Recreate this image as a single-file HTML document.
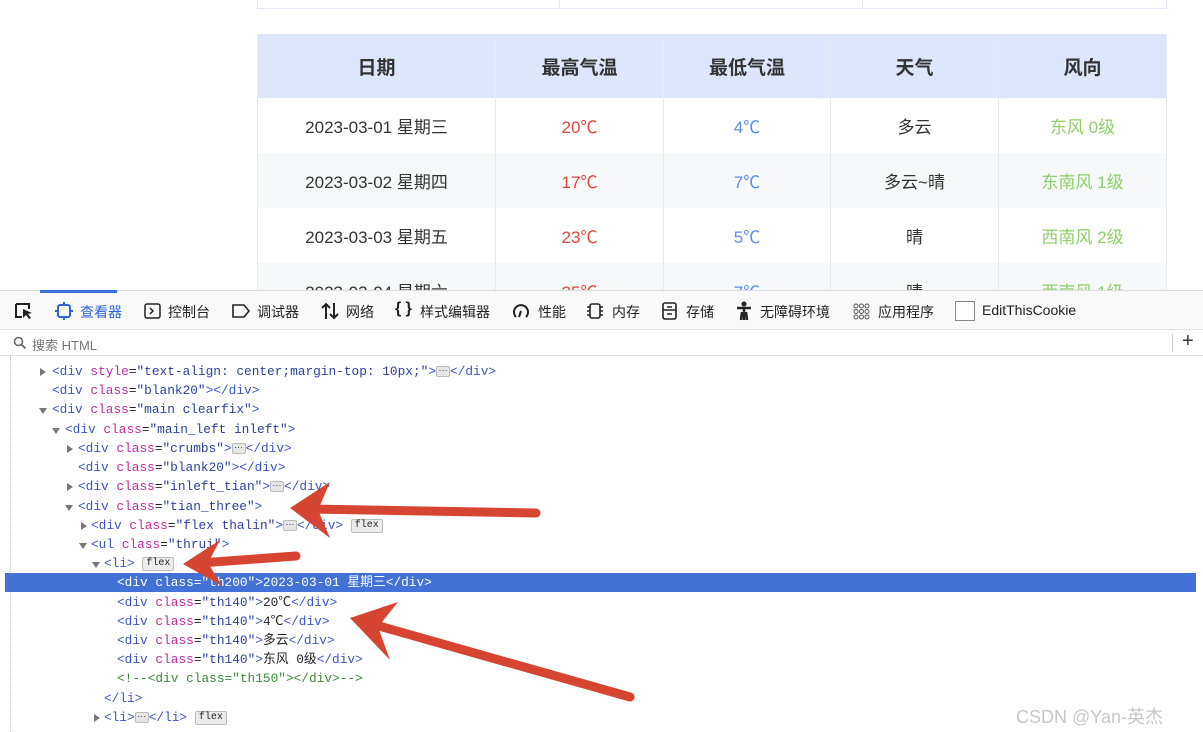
<!DOCTYPE html>
<html><head><meta charset="utf-8"><style>
*{margin:0;padding:0;box-sizing:border-box}
body{width:1203px;height:732px;overflow:hidden;background:#fff;position:relative;font-family:"Liberation Sans","Noto Sans CJK SC",sans-serif}
.abs{position:absolute}
table{position:absolute;left:257px;top:34px;border-collapse:collapse;width:910px;font-size:17px;color:#333}
td,th{text-align:center;border:1px solid #e6eaf3;border-top:none;border-bottom:none}
th{background:#dde6fa;height:64px;font-weight:bold;font-size:19px;color:#333}
td{height:55px}
tr.g td{background:#f7f8fa}
.r{color:#e0463a}.b{color:#5b8ef0}.gr{color:#8fcf6a}
.tb{left:0;top:290px;width:1203px;height:40px;background:#f9f9fa;border-top:1px solid #ddd;border-bottom:1px solid #e0e0e0;font-size:14px;color:#222}
.tb span{position:absolute;top:11px;white-space:nowrap}
.sr{left:0;top:330px;width:1203px;height:26px;border-bottom:1px solid #e0e0e0;font-size:13px;color:#777}
.tree{left:0;top:356px;width:1203px;height:376px}
.ln{position:absolute;height:19px;line-height:19px;white-space:pre;color:#222;font-family:"Liberation Mono","Noto Sans CJK SC",monospace;font-size:12.8px}
.t{color:#3a56c4}.a{color:#c02ba0}.v{color:#2a3f9e}.c{color:#3c8a3c}
.tri{position:absolute;width:0;height:0}
.tr{border-top:4px solid transparent;border-bottom:4px solid transparent;border-left:6px solid #777}
.td{border-left:4px solid transparent;border-right:4px solid transparent;border-top:6px solid #777}
.dots{display:inline-block;width:14px;height:11px;background:#e6e6e6;border:1px solid #bbb;border-radius:2px;font-size:9px;line-height:6px;text-align:center;vertical-align:middle;color:#333;font-family:"Liberation Sans",sans-serif}
.fx{display:inline-block;font-size:10px;line-height:12px;padding:0 3px;background:#ececec;border:1px solid #bbb;border-radius:2px;vertical-align:middle;color:#222}
.hl{left:5px;top:573px;width:1191px;height:19px;background:#4372d6}
</style></head><body>
<div class="abs" style="left:257px;top:0;width:910px;height:9px;border:1px solid #e0e6f5;border-top:none"></div>
<div class="abs" style="left:559px;top:0;width:1px;height:9px;background:#e6eaf3"></div>
<div class="abs" style="left:862px;top:0;width:1px;height:9px;background:#e6eaf3"></div>
<table>
<tr><th style="width:238px">日期</th><th style="width:168px">最高气温</th><th style="width:167px">最低气温</th><th style="width:168px">天气</th><th>风向</th></tr>
<tr><td>2023-03-01 星期三</td><td class="r">20℃</td><td class="b">4℃</td><td>多云</td><td class="gr">东风 0级</td></tr>
<tr class="g"><td>2023-03-02 星期四</td><td class="r">17℃</td><td class="b">7℃</td><td>多云~晴</td><td class="gr">东南风 1级</td></tr>
<tr><td>2023-03-03 星期五</td><td class="r">23℃</td><td class="b">5℃</td><td>晴</td><td class="gr">西南风 2级</td></tr>
<tr class="g"><td>2023-03-04 星期六</td><td class="r">25℃</td><td class="b">7℃</td><td>晴</td><td class="gr">西南风 1级</td></tr>
</table>
<div class="abs tb">
<div class="abs" style="left:40px;top:-1px;width:77px;height:3px;background:#3b6fe0"></div>
<svg class="abs" style="left:14px;top:11px" width="20" height="18" viewBox="0 0 20 18"><path d="M2 2h13v5M2 2v13h6" fill="none" stroke="#222" stroke-width="2"/><path d="M9 7l9 4-4 1 3 4-2 1-3-4-3 3z" fill="#222"/></svg>
<svg class="abs" style="left:55px;top:11px" width="18" height="18" viewBox="0 0 18 18"><rect x="3" y="3" width="12" height="12" rx="2" fill="none" stroke="#2f63d8" stroke-width="2"/><path d="M9 0v3M9 15v3M0 9h3M15 9h3" stroke="#2f63d8" stroke-width="2"/></svg>
<span style="left:80px;color:#2f63d8">查看器</span>
<svg class="abs" style="left:144px;top:12px" width="17" height="16"><rect x="1" y="1" width="15" height="14" rx="2" fill="none" stroke="#222" stroke-width="1.5"/><path d="M6 5l3 3-3 3" fill="none" stroke="#222" stroke-width="1.5"/></svg>
<span style="left:168px">控制台</span>
<svg class="abs" style="left:232px;top:12px" width="18" height="16"><path d="M1 2h11l5 6-5 6H1z" fill="none" stroke="#222" stroke-width="1.6"/></svg>
<span style="left:257px">调试器</span>
<svg class="abs" style="left:320px;top:10px" width="20" height="20"><path d="M6 18V3M2 7l4-4 4 4M14 2v15M10 13l4 4 4-4" fill="none" stroke="#222" stroke-width="2"/></svg>
<span style="left:346px">网络</span>
<span style="left:395px;top:9px;font-size:16px;font-weight:bold">{ }</span>
<span style="left:420px">样式编辑器</span>
<svg class="abs" style="left:512px;top:11px" width="18" height="18"><path d="M4 15A7 7 0 1 1 14 15" fill="none" stroke="#222" stroke-width="2"/><path d="M9 9l-2 6" stroke="#222" stroke-width="2"/></svg>
<span style="left:538px">性能</span>
<svg class="abs" style="left:586px;top:11px" width="18" height="18"><rect x="4" y="2" width="10" height="14" rx="2" fill="none" stroke="#222" stroke-width="1.6"/><path d="M1 5h3M1 9h3M1 13h3M14 5h3M14 9h3M14 13h3" stroke="#222" stroke-width="1.4"/></svg>
<span style="left:612px">内存</span>
<svg class="abs" style="left:662px;top:11px" width="15" height="18"><rect x="1" y="1" width="13" height="16" rx="2" fill="none" stroke="#222" stroke-width="1.6"/><path d="M1 8h13M5 5h5M5 12h5" stroke="#222" stroke-width="1.4"/></svg>
<span style="left:686px">存储</span>
<svg class="abs" style="left:736px;top:10px" width="16" height="20"><circle cx="8" cy="3" r="2.5" fill="#222"/><path d="M1 7h14M8 7v12M5 19l1-8M11 19l-1-8" stroke="#222" stroke-width="2.5"/></svg>
<span style="left:760px">无障碍环境</span>
<svg class="abs" style="left:853px;top:12px" width="17" height="17"><g fill="none" stroke="#555" stroke-width="1"><circle cx="3" cy="3" r="2"/><circle cx="8.5" cy="3" r="2"/><circle cx="14" cy="3" r="2"/><circle cx="3" cy="8.5" r="2"/><circle cx="8.5" cy="8.5" r="2"/><circle cx="14" cy="8.5" r="2"/><circle cx="3" cy="14" r="2"/><circle cx="8.5" cy="14" r="2"/><circle cx="14" cy="14" r="2"/></g></svg>
<span style="left:878px">应用程序</span>
<div class="abs" style="left:955px;top:10px;width:20px;height:20px;border:1px solid #888;background:#fff"></div>
<span style="left:982px">EditThisCookie</span>
</div>
<div class="abs sr">
<svg class="abs" style="left:13px;top:6px" width="14" height="14"><circle cx="5.5" cy="5.5" r="4" fill="none" stroke="#666" stroke-width="1.6"/><path d="M8.5 8.5l4 4" stroke="#666" stroke-width="1.8"/></svg>
<span class="abs" style="left:32px;top:5px">搜索 HTML</span>
<div class="abs" style="left:1172px;top:4px;width:1px;height:18px;background:#ccc"></div>
<span class="abs" style="left:1182px;top:0px;font-size:20px;color:#333">+</span>
</div>
<div class="abs tree">
<div class="abs" style="left:10px;top:0;width:0;height:376px;border-left:1px dotted #bbb"></div>
</div>
<div class="abs hl"></div>
<div class="ln" style="left:52px;top:362px"><span class="t">&lt;div </span><span class="a">style</span>=<span class="v">"text-align: center;margin-top: 10px;"</span><span class="t">&gt;</span><span class="dots">···</span><span class="t">&lt;/div&gt;</span></div>
<div class="ln" style="left:52px;top:381px"><span class="t">&lt;div </span><span class="a">class</span>=<span class="v">"blank20"</span><span class="t">&gt;&lt;/div&gt;</span></div>
<div class="ln" style="left:52px;top:400px"><span class="t">&lt;div </span><span class="a">class</span>=<span class="v">"main clearfix"</span><span class="t">&gt;</span></div>
<div class="ln" style="left:65px;top:420px"><span class="t">&lt;div </span><span class="a">class</span>=<span class="v">"main_left inleft"</span><span class="t">&gt;</span></div>
<div class="ln" style="left:78px;top:439px"><span class="t">&lt;div </span><span class="a">class</span>=<span class="v">"crumbs"</span><span class="t">&gt;</span><span class="dots">···</span><span class="t">&lt;/div&gt;</span></div>
<div class="ln" style="left:78px;top:458px"><span class="t">&lt;div </span><span class="a">class</span>=<span class="v">"blank20"</span><span class="t">&gt;&lt;/div&gt;</span></div>
<div class="ln" style="left:78px;top:477px"><span class="t">&lt;div </span><span class="a">class</span>=<span class="v">"inleft_tian"</span><span class="t">&gt;</span><span class="dots">···</span><span class="t">&lt;/div&gt;</span></div>
<div class="ln" style="left:78px;top:497px"><span class="t">&lt;div </span><span class="a">class</span>=<span class="v">"tian_three"</span><span class="t">&gt;</span></div>
<div class="ln" style="left:91px;top:516px"><span class="t">&lt;div </span><span class="a">class</span>=<span class="v">"flex thalin"</span><span class="t">&gt;</span><span class="dots">···</span><span class="t">&lt;/div&gt;</span> <span class="fx">flex</span></div>
<div class="ln" style="left:91px;top:535px"><span class="t">&lt;ul </span><span class="a">class</span>=<span class="v">"thrui"</span><span class="t">&gt;</span></div>
<div class="ln" style="left:104px;top:554px"><span class="t">&lt;li&gt;</span> <span class="fx">flex</span></div>
<div class="ln" style="left:117px;top:573px;color:#fff">&lt;div class="th200"&gt;2023-03-01 星期三&lt;/div&gt;</div>
<div class="ln" style="left:117px;top:593px"><span class="t">&lt;div </span><span class="a">class</span>=<span class="v">"th140"</span><span class="t">&gt;</span>20℃<span class="t">&lt;/div&gt;</span></div>
<div class="ln" style="left:117px;top:612px"><span class="t">&lt;div </span><span class="a">class</span>=<span class="v">"th140"</span><span class="t">&gt;</span>4℃<span class="t">&lt;/div&gt;</span></div>
<div class="ln" style="left:117px;top:631px"><span class="t">&lt;div </span><span class="a">class</span>=<span class="v">"th140"</span><span class="t">&gt;</span>多云<span class="t">&lt;/div&gt;</span></div>
<div class="ln" style="left:117px;top:650px"><span class="t">&lt;div </span><span class="a">class</span>=<span class="v">"th140"</span><span class="t">&gt;</span>东风 0级<span class="t">&lt;/div&gt;</span></div>
<div class="ln c" style="left:117px;top:669px">&lt;!--&lt;div class="th150"&gt;&lt;/div&gt;--&gt;</div>
<div class="ln" style="left:104px;top:689px"><span class="t">&lt;/li&gt;</span></div>
<div class="ln" style="left:104px;top:708px"><span class="t">&lt;li&gt;</span><span class="dots">···</span><span class="t">&lt;/li&gt;</span> <span class="fx">flex</span></div>
<div class="tri tr" style="left:40px;top:368px"></div>
<div class="tri td" style="left:39px;top:408px"></div>
<div class="tri td" style="left:52px;top:428px"></div>
<div class="tri tr" style="left:67px;top:445px"></div>
<div class="tri tr" style="left:67px;top:483px"></div>
<div class="tri td" style="left:65px;top:505px"></div>
<div class="tri tr" style="left:81px;top:522px"></div>
<div class="tri td" style="left:79px;top:543px"></div>
<div class="tri td" style="left:92px;top:562px"></div>
<div class="tri tr" style="left:94px;top:714px"></div>
<svg class="abs" style="left:0;top:0" width="1203" height="732">
<g stroke="#d64531" stroke-width="9" stroke-linecap="round" fill="#d64531">
<line x1="536" y1="513" x2="310" y2="509"/>
<line x1="296" y1="556" x2="200" y2="563"/>
<line x1="630" y1="697" x2="372" y2="624"/>
</g>
<g fill="#d64531">
<polygon points="290,508 330,482 318,510 330,538"/>
<polygon points="183,564 220,540 208,563 222,586"/>
<polygon points="350,618 398,602 378,627 390,660"/>
</g>
</svg>
<div class="abs" style="left:1016px;top:703px;font-size:18px;color:#c8c8c8">CSDN @Yan-英杰</div>
</body></html>
